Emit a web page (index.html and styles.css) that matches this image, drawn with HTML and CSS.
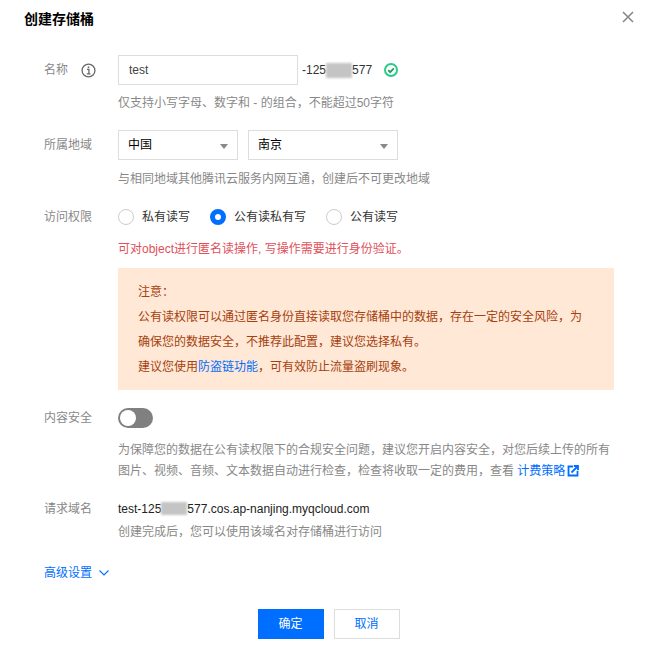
FILE: index.html
```html
<!DOCTYPE html>
<html lang="zh-CN">
<head>
  <meta charset="UTF-8" />
  <title>创建存储桶</title>
  <link rel="stylesheet" href="styles.css">
</head>
<body>
  <div class="dialog">
    <div class="dialog-head">
      <h3>创建存储桶</h3>
      <svg class="close" width="14" height="14" viewBox="0 0 14 14"><path d="M2 2l10 10M12 2L2 12" stroke="#888" stroke-width="1.6" fill="none"/></svg>
    </div>

    <div class="row row-name">
      <div class="label">名称
        <svg class="info" width="15" height="15" viewBox="0 0 14 14"><circle cx="7" cy="7" r="6" stroke="#666" stroke-width="1.2" fill="none"/><path d="M5.6 6h1.8v4M5.4 10.2h3.4" stroke="#666" stroke-width="1.2" fill="none"/><rect x="6.3" y="3.2" width="1.4" height="1.5" fill="#666"/></svg>
      </div>
      <div class="field">
        <div class="inline">
          <div class="input">test</div>
          <span class="suffix">-125<i class="blur blur-a"></i>577</span>
          <svg class="ok" width="14" height="14" viewBox="0 0 14 14"><circle cx="7" cy="7" r="6" stroke="#29cc85" stroke-width="2" fill="none"/><path d="M4.2 7.1l2 2 3.6-3.7" stroke="#1f9d68" stroke-width="1.8" fill="none"/></svg>
        </div>
        <p class="help">仅支持小写字母、数字和 - 的组合，不能超过50字符</p>
      </div>
    </div>

    <div class="row row-region">
      <div class="label">所属地域</div>
      <div class="field">
        <div class="inline selects">
          <div class="select select-a">中国<span class="caret"></span></div>
          <div class="select select-b">南京<span class="caret"></span></div>
        </div>
        <p class="help help-region">与相同地域其他腾讯云服务内网互通，创建后不可更改地域</p>
      </div>
    </div>

    <div class="row row-access">
      <div class="label">访问权限</div>
      <div class="field">
        <div class="radios">
          <label class="radio"><span class="dot"></span>私有读写</label>
          <label class="radio on"><span class="dot"></span>公有读私有写</label>
          <label class="radio"><span class="dot"></span>公有读写</label>
        </div>
        <p class="danger">可对object进行匿名读操作, 写操作需要进行身份验证。</p>
        <div class="notice">
          <p>注意：</p>
          <p>公有读权限可以通过匿名身份直接读取您存储桶中的数据，存在一定的安全风险，为确保您的数据安全，不推荐此配置，建议您选择私有。</p>
          <p>建议您使用<a href="#">防盗链功能</a>，可有效防止流量盗刷现象。</p>
        </div>
      </div>
    </div>

    <div class="row row-safe">
      <div class="label">内容安全</div>
      <div class="field">
        <div class="toggle"><span class="knob"></span></div>
        <p class="help help-long">为保障您的数据在公有读权限下的合规安全问题，建议您开启内容安全，对您后续上传的所有图片、视频、音频、文本数据自动进行检查，检查将收取一定的费用，查看 <a href="#">计费策略</a><svg class="ext" width="12" height="12" viewBox="0 0 12 12"><path d="M6 1.5H1.5v9h9V6" stroke="#006eff" stroke-width="1.8" fill="none"/><path d="M4.5 7.5L10 2M6.8 1h4.2v4.2" stroke="#006eff" stroke-width="1.8" fill="none"/></svg></p>
      </div>
    </div>

    <div class="row row-domain">
      <div class="label">请求域名</div>
      <div class="field">
        <div class="domain">test-125<i class="blur blur-b"></i>577.cos.ap-nanjing.myqcloud.com</div>
        <p class="help help-domain">创建完成后，您可以使用该域名对存储桶进行访问</p>
      </div>
    </div>

    <a class="advanced" href="#">高级设置
      <svg width="12" height="8" viewBox="0 0 12 8"><path d="M1.5 1.5L6 6l4.5-4.5" stroke="#006eff" stroke-width="1.1" fill="none"/></svg>
    </a>

    <div class="actions">
      <button class="btn primary">确定</button>
      <button class="btn">取消</button>
    </div>
  </div>
</body>
</html>
```
FILE: styles.css
```css
* {
  box-sizing: border-box;
}

body {
  margin: 0;
  background: #fff;
  color: #000;
  font-family: "Liberation Sans", "Noto Sans CJK SC", sans-serif;
  font-size: 12px;
  line-height: 18px;
}

p {
  margin: 0;
}

a {
  color: #006eff;
  text-decoration: none;
}

.dialog {
  width: 659px;
  height: 648px;
  padding: 10px 45px 0 24px;
}

.dialog-head {
  display: flex;
  justify-content: space-between;
  align-items: center;
  height: 18px;
  margin-right: -21px;
}

.dialog-head h3 {
  margin: 0;
  font-size: 14px;
  font-weight: bold;
  line-height: 18px;
}

.close {
  margin-top: -4px;
}

.row {
  display: flex;
  padding-left: 20px;
}

.label {
  width: 74px;
  flex: none;
  display: flex;
  align-items: center;
  height: 30px;
  color: #888;
}

.info {
  margin-left: 13px;
}

.field {
  flex: 1;
  min-width: 0;
}

.inline {
  display: flex;
  align-items: center;
}

.row-name {
  margin-top: 27px;
}

.input {
  width: 180px;
  height: 30px;
  padding-left: 10px;
  border: 1px solid #ddd;
  line-height: 28px;
  color: #444;
}

.suffix {
  margin-left: 4px;
  color: #333;
  display: flex;
  align-items: center;
}

.blur {
  display: inline-block;
  background: #c4c4c4;
  filter: blur(1.2px);
}

.blur-a {
  width: 26px;
  height: 15px;
}

.blur-b {
  width: 26px;
  height: 13px;
  vertical-align: -2px;
}

.ok {
  margin-left: 12px;
}

.help {
  margin-top: 9px;
  color: #888;
}

.help-region {
  margin-top: 10px;
}

.row-region {
  margin-top: 18px;
}

.selects {
  gap: 10px;
}

.select {
  position: relative;
  height: 30px;
  padding-left: 9px;
  border: 1px solid #ddd;
  line-height: 28px;
}

.select-a {
  width: 120px;
}

.select-b {
  width: 150px;
}

.caret {
  position: absolute;
  right: 9px;
  top: 13px;
  border-left: 4px solid transparent;
  border-right: 4px solid transparent;
  border-top: 5px solid #888;
}

.row-access {
  margin-top: 14px;
}

.row-access .label {
  height: 30px;
}

.radios {
  display: flex;
  align-items: center;
  height: 30px;
}

.radio {
  display: flex;
  align-items: center;
  margin-right: 20px;
  color: #333;
}

.dot {
  width: 16px;
  height: 16px;
  margin-right: 8px;
  border: 1px solid #ccc;
  border-radius: 50%;
}

.radio.on .dot {
  border: 5px solid #006eff;
}

.danger {
  margin-top: 8px;
  color: #e1505a;
}

.notice {
  margin-top: 10px;
  height: 122px;
  padding: 12px 30px 10px 20px;
  background: #ffe8d5;
  color: #a5400f;
  line-height: 25px;
}

.notice a {
  color: #006eff;
}

.row-safe {
  margin-top: 13px;
}

.toggle {
  width: 35px;
  height: 20px;
  margin-top: 5px;
  padding: 2px;
  border-radius: 10px;
  background: #808080;
}

.knob {
  display: block;
  width: 16px;
  height: 16px;
  border-radius: 50%;
  background: #fff;
}

.help-long {
  margin-top: 12px;
  line-height: 21px;
}

.ext {
  vertical-align: -2px;
  margin-left: 2px;
}

.row-domain {
  margin-top: 18px;
}

.row-domain .label {
  height: 18px;
}

.domain {
  color: #222;
}

.help-domain {
  margin-top: 5px;
}

.advanced {
  display: flex;
  align-items: center;
  gap: 6px;
  margin: 23px 0 0 20px;
}

.actions {
  display: flex;
  justify-content: center;
  gap: 10px;
  margin-top: 27px;
  padding-left: 19px;
}

.btn {
  width: 66px;
  height: 30px;
  padding: 0;
  border: 1px solid #ddd;
  background: #fff;
  color: #006eff;
  font: inherit;
}

.btn.primary {
  border-color: #006eff;
  background: #006eff;
  color: #fff;
}
```
